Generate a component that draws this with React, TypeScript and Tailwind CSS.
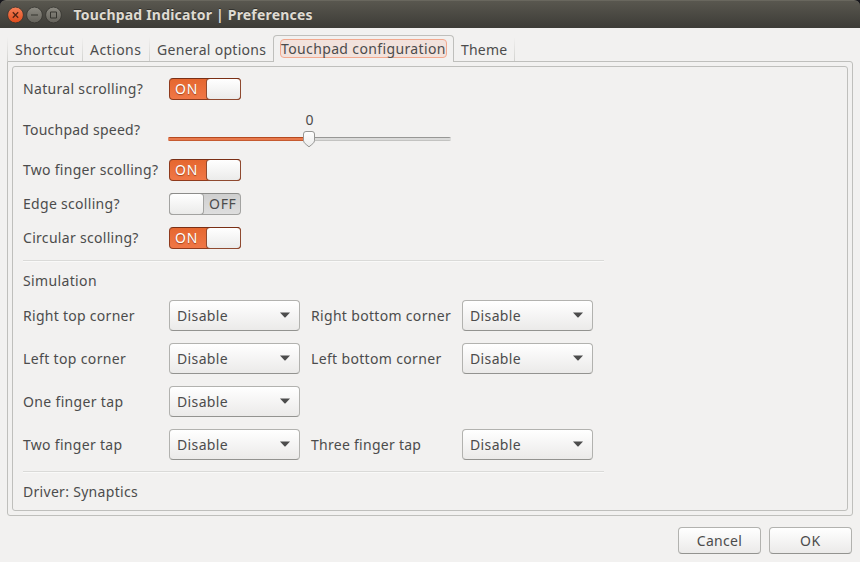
import React from "react";

function Switch({ on }: { on: boolean }) {
  if (on) {
    return (
      <div className="flex h-[22px] w-[72px] rounded-[4px] border border-[#8f3a1c] border-t-[#7a2f15] bg-linear-to-b from-[#e5672f] to-[#f07746]">
        <span className="flex w-[36px] items-center pl-[5px] text-[14px] tracking-[0.7px] text-white [text-shadow:0_1px_1px_#a3431c]">ON</span>
        <span className="-my-px -mr-px h-[22px] w-[35px] rounded-[4px] border border-[#8f4a30] border-t-[#7a2f15] bg-linear-to-b from-white to-[#ebebea]" />
      </div>
    );
  }
  return (
    <div className="flex h-[22px] w-[72px] rounded-[4px] border border-[#a3a3a1] border-t-[#8c8c8a] bg-linear-to-b from-[#cfcfcf] to-[#dedede]">
      <span className="-my-px -ml-px h-[22px] w-[35px] shrink-0 rounded-[4px] border border-[#a3a3a1] border-t-[#8c8c8a] bg-linear-to-b from-white to-[#ebebea]" />
      <span className="flex items-center pl-[5px] text-[14px] tracking-[0.7px]">OFF</span>
    </div>
  );
}

function Combo() {
  return (
    <button className="flex h-[31px] w-[131px] items-center justify-between rounded-[4px] border border-[#b2b2af] border-b-[#939390] bg-linear-to-b from-white to-[#ebeae9] pr-[9px] pl-[7px]">
      <span className="tracking-[0.37px]">Disable</span>
      <svg width="10" height="6" viewBox="0 0 10 6" className="mb-px">
        <path d="M0 0.5H10L5.6 5.2Q5 5.7 4.4 5.2Z" fill="#4c4c4c" />
      </svg>
    </button>
  );
}

function Separator() {
  return <div className="h-[2px] w-[581px] shrink-0 border-t border-b border-t-[#dadad8] border-b-[#f9f9f8]" />;
}

function Row({ label, tracking, height, children }: { label: string; tracking: string; height: string; children?: React.ReactNode }) {
  return (
    <div className={`flex shrink-0 items-center ${height}`}>
      <span className={`w-[146px] shrink-0 whitespace-nowrap ${tracking}`}>{label}</span>
      {children}
    </div>
  );
}

function TabDivider() {
  return <div className="h-[24px] w-px bg-linear-to-b from-[#f2f1f0] to-[#d2d2cf]" />;
}

function SpeedSlider() {
  return (
    <div className="relative -ml-px flex h-[38px] w-[283px] flex-col items-center">
      <span className="flex h-[18px] items-center">0</span>
      <div className="mt-[8px] flex h-[4px] w-full overflow-hidden rounded-[2px]">
        <div className="h-full w-[141px] border-t border-b border-t-[#b54a20] border-b-[#c65a30] bg-[#e8794c]" />
        <div className="h-full flex-1 border-t border-b border-t-[#979795] border-b-[#c3c3c1] bg-[#dadad9]" />
      </div>
      <svg width="13" height="17" viewBox="0 0 13 17" className="absolute top-[20px] left-[135px]">
        <defs>
          <linearGradient id="knob" x1="0" y1="0" x2="0" y2="1">
            <stop offset="0" stopColor="#ffffff" />
            <stop offset="1" stopColor="#ebebea" />
          </linearGradient>
        </defs>
        <path d="M3 0.5H9Q11.5 0.5 11.5 3V9.4C11.5 12 9 13.3 6 15.8C3 13.3 0.5 12 0.5 9.4V3Q0.5 0.5 3 0.5Z" fill="url(#knob)" stroke="#969694" />
      </svg>
    </div>
  );
}

export default function App() {
  return (
    <div className="flex h-[562px] w-[860px] flex-col overflow-hidden bg-[#17171c] font-['Noto_Sans',sans-serif] text-[14px] leading-[20px] text-[#4c4c4c]">
      <header className="flex h-[28px] shrink-0 items-center rounded-t-[6px] border-t border-t-[#69675e] bg-linear-to-b from-[#59574f] to-[#3d3c37] pl-[7px]">
        <svg width="56" height="18" viewBox="0 0 56 18" fill="none">
          <defs>
            <linearGradient id="close" x1="0" y1="0" x2="0" y2="1">
              <stop offset="0" stopColor="#f58058" />
              <stop offset="1" stopColor="#df4b1b" />
            </linearGradient>
            <linearGradient id="grey" x1="0" y1="0" x2="0" y2="1">
              <stop offset="0" stopColor="#8c8a82" />
              <stop offset="1" stopColor="#64625b" />
            </linearGradient>
          </defs>
          <circle cx="8.5" cy="9" r="7.9" fill="url(#close)" stroke="#35342f" strokeWidth="0.8" />
          <circle cx="27.5" cy="9" r="7.9" fill="url(#grey)" stroke="#35342f" strokeWidth="0.8" />
          <circle cx="46.5" cy="9" r="7.9" fill="url(#grey)" stroke="#35342f" strokeWidth="0.8" />
          <path d="M5.8 6.3L11.2 11.7M11.2 6.3L5.8 11.7" stroke="#512314" strokeWidth="1.3" />
          <path d="M24 9H31" stroke="#35342f" />
          <path d="M43.5 6H49.5V12H43.5Z" stroke="#35342f" />
        </svg>
        <h1 className="ml-[10.5px] text-[14px] font-bold tracking-[0.19px] whitespace-nowrap text-[#dfdbd2] [text-shadow:0_-1px_0_#33322e]">Touchpad Indicator | Preferences</h1>
      </header>

      <main className="flex flex-1 flex-col bg-[#f2f1f0] px-[7px]">
        <nav className="flex h-[33px] shrink-0 items-end whitespace-nowrap">
          <TabDivider />
          <span className="flex h-[22px] w-[74px] items-center pl-[7px] tracking-[0.45px]">Shortcut</span>
          <TabDivider />
          <span className="flex h-[22px] w-[66px] items-center pl-[7px] tracking-[0.45px]">Actions</span>
          <TabDivider />
          <span className="flex h-[22px] w-[123px] items-center pl-[7px] tracking-[0.3px]">General options</span>
          <div className="z-10 -mb-px flex h-[27px] w-[181px] items-start rounded-t-[4px] border border-b-0 border-[#bfbfbc] bg-[#f2f1f0] px-[6px] pt-[3px]">
            <span className="flex h-[19px] w-full items-center rounded-[4px] border border-[#f2a98f] bg-[#f2e2dc] tracking-[0.37px]">Touchpad configuration</span>
          </div>
          <span className="flex h-[22px] w-[60px] items-center pl-[7px] tracking-[0.2px]">Theme</span>
          <TabDivider />
        </nav>

        <section className="h-[455px] shrink-0 rounded-b-[3px] rounded-tr-[3px] border border-[#bfbfbc] p-[4px]">
          <div className="flex h-full flex-col rounded-[3px] border border-[#bfbfbc] pl-[10px]">
            <Row label="Natural scrolling?" tracking="tracking-[0.32px]" height="h-[44px]"><Switch on /></Row>
            <Row label="Touchpad speed?" tracking="tracking-[0.23px]" height="h-[38px]"><SpeedSlider /></Row>
            <Row label="Two finger scolling?" tracking="tracking-[0.28px]" height="h-[42px]"><Switch on /></Row>
            <Row label="Edge scolling?" tracking="tracking-[0.3px]" height="h-[26px]"><Switch on={false} /></Row>
            <Row label="Circular scolling?" tracking="tracking-[0.3px]" height="h-[42px]"><Switch on /></Row>
            <div className="h-px shrink-0" />
            <Separator />
            <Row label="Simulation" tracking="tracking-[0.36px]" height="h-[38px]" />
            <div className="grid shrink-0 grid-cols-[146px_142px_151px_131px] items-center gap-y-[12px] whitespace-nowrap">
              <span className="tracking-[0.28px]">Right top corner</span><Combo />
              <span className="tracking-[0.32px]">Right bottom corner</span><Combo />
              <span className="tracking-[0.36px]">Left top corner</span><Combo />
              <span className="tracking-[0.34px]">Left bottom corner</span><Combo />
              <span className="tracking-[0.34px]">One finger tap</span><Combo />
              <span /><span />
              <span className="tracking-[0.3px]">Two finger tap</span><Combo />
              <span className="tracking-[0.27px]">Three finger tap</span><Combo />
            </div>
            <div className="h-[11px] shrink-0" />
            <Separator />
            <Row label="Driver: Synaptics" tracking="tracking-[0.3px]" height="h-[37px]" />
          </div>
        </section>

        <footer className="mt-[11px] mr-px flex shrink-0 gap-[8px] self-end">
          <button className="h-[27px] w-[83px] rounded-[4px] border border-[#b2b2af] border-b-[#939390] bg-linear-to-b from-white to-[#ebeae9] tracking-[0.3px]">Cancel</button>
          <button className="h-[27px] w-[83px] rounded-[4px] border border-[#b2b2af] border-b-[#939390] bg-linear-to-b from-white to-[#ebeae9] tracking-[0.8px]">OK</button>
        </footer>
      </main>
    </div>
  );
}
